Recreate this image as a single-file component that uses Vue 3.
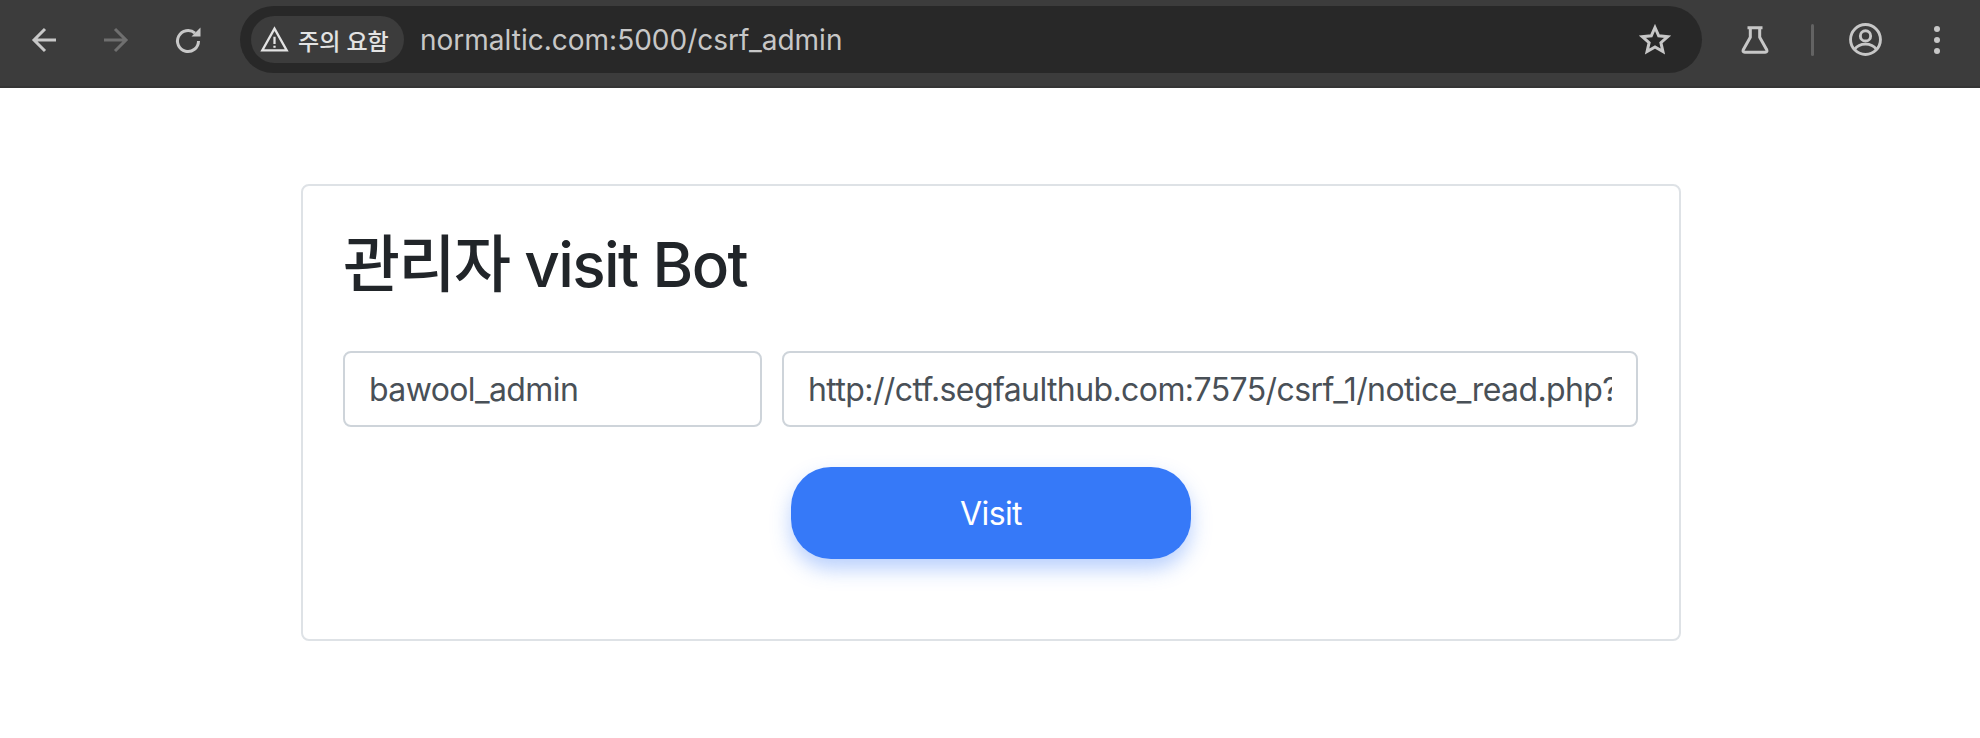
<script setup>
const name = 'bawool_admin'
const url = 'http://ctf.segfaulthub.com:7575/csrf_1/notice_read.php?id=1'
</script>

<template>
  <div class="page">
    <header class="toolbar">
      <div class="nav">
        <svg class="nav-icon" viewBox="0 0 32 32"><path d="M28 16H6M17 5 6 16l11 11" /></svg>
        <svg class="nav-icon dim" viewBox="0 0 32 32"><path d="M4 16h22M15 5l11 11-11 11" /></svg>
        <svg class="nav-icon" viewBox="0 0 32 32"><path d="M26.500 17A10.500 10.500 0 1 1 23 9.200" /><path class="head" d="M19.500 12.500h9v-9Z" /></svg>
      </div>
      <div class="omnibox">
        <div class="chip">
          <svg class="warn" viewBox="0 0 32 32"><path d="M16 4 2.500 28h27Z" /><path d="M16 13v8M16 23v2" /></svg>
          <span>주의 요함</span>
        </div>
        <span class="address">normaltic.com:5000/csrf_admin</span>
        <svg class="star" viewBox="0 0 32 32"><path d="m16 3.500 3.700 8.300 9 .9-6.800 6 2 8.800L16 23l-7.900 4.500 2-8.800-6.800-6 9-.9Z" /></svg>
      </div>
      <div class="actions">
        <svg class="flask" viewBox="0 0 32 32"><path d="M8 3h16M11 3v10L3.500 26.500Q2.500 29 5 29h22q2.500 0 1.500-2.500L21 13V3" /></svg>
        <span class="divider"></span>
        <svg class="profile" viewBox="0 0 32 32"><circle cx="16" cy="16" r="14.500" /><circle cx="16" cy="12.500" r="5" /><path d="M5.500 25.500Q9 20.500 16 20.500t10.500 5" /></svg>
        <div class="dots"><i></i><i></i><i></i></div>
      </div>
    </header>

    <main class="card">
      <h1>관리자 visit Bot</h1>
      <div class="fields">
        <input type="text" :value="name" readonly />
        <input type="text" :value="url" readonly />
      </div>
      <div class="submit"><button type="button">Visit</button></div>
    </main>
  </div>
</template>

<style>
html, body { margin: 0; background: #fff; }
</style>

<style scoped>
.page {
  width: 1980px;
  height: 738px;
  overflow: hidden;
  background: #fff;
  font-family: Inter, "Noto Sans CJK KR", sans-serif;
}
.toolbar {
  box-sizing: border-box;
  height: 88px;
  display: flex;
  align-items: center;
  padding: 0 0 7px 28px;
  background: #3c3c3c;
  border-bottom: 2px solid #353535;
}
.nav {
  display: flex;
  gap: 40px;
  width: 212px;
  flex: none;
}
.nav-icon {
  width: 32px;
  height: 32px;
  fill: none;
  stroke: #c8c8c8;
  stroke-width: 3;
}
.nav-icon.dim { stroke: #6f6f6f; }
.nav-icon .head { fill: #c8c8c8; stroke: none; }
.omnibox {
  width: 1462px;
  height: 67px;
  flex: none;
  display: flex;
  align-items: center;
  box-sizing: border-box;
  padding: 0 31px 0 11px;
  border-radius: 34px;
  background: #282828;
}
.chip {
  height: 47px;
  width: 153px;
  box-sizing: border-box;
  padding-left: 9px;
  display: flex;
  align-items: center;
  gap: 9px;
  border-radius: 24px;
  background: #3c3c3c;
  color: #e3e3e3;
  font-size: 23px;
  font-weight: 500;
  flex: none;
  white-space: nowrap;
}
.warn {
  width: 29px;
  height: 29px;
  fill: none;
  stroke: #e3e3e3;
  stroke-width: 2.500;
  flex: none;
}
.address {
  margin-left: 16px;
  flex: 1;
  color: #c7c7c7;
  font-size: 28px;
}
.star {
  width: 32px;
  height: 32px;
  fill: none;
  stroke: #c7c7c7;
  stroke-width: 3;
  stroke-linejoin: miter;
}
.actions {
  display: flex;
  align-items: center;
  margin-left: 38px;
}
.flask {
  width: 30px;
  height: 30px;
  fill: none;
  stroke: #c7c7c7;
  stroke-width: 3.200;
  stroke-linejoin: round;
}
.divider {
  width: 3px;
  height: 32px;
  margin-left: 41px;
  background: #636363;
  border-radius: 2px;
}
.profile {
  width: 33px;
  height: 33px;
  margin-left: 35px;
  fill: none;
  stroke: #c7c7c7;
  stroke-width: 2.800;
}
.dots {
  display: flex;
  flex-direction: column;
  gap: 5px;
  margin-left: 52px;
}
.dots i {
  width: 6px;
  height: 6px;
  border-radius: 50%;
  background: #c7c7c7;
}
.card {
  box-sizing: border-box;
  width: 1380px;
  height: 457px;
  margin: 96px 0 0 301px;
  padding: 40px;
  border: 2px solid #dee2e6;
  border-radius: 8px;
}
h1 {
  margin: 0;
  padding-top: 1px;
  color: #212529;
  font-size: 62px;
  font-weight: 500;
  line-height: 76px;
  letter-spacing: -1.600px;
}
.fields {
  display: grid;
  grid-template-columns: 419px 856px;
  gap: 20px;
  margin-top: 48px;
}
input {
  box-sizing: border-box;
  width: 100%;
  height: 76px;
  padding: 0 24px;
  border: 2px solid #ced4da;
  border-radius: 8px;
  outline: none;
  background: #fff;
  color: #495057;
  font-family: inherit;
  font-size: 32px;
  letter-spacing: -0.600px;
}
.submit {
  display: flex;
  justify-content: center;
  margin-top: 40px;
}
button {
  width: 400px;
  height: 92px;
  border: none;
  border-radius: 40px;
  background: #3679f8;
  color: #fff;
  font-family: inherit;
  font-size: 32px;
  letter-spacing: -0.600px;
  box-shadow: 0 10px 20px rgba(55, 121, 248, 0.350);
}
</style>
